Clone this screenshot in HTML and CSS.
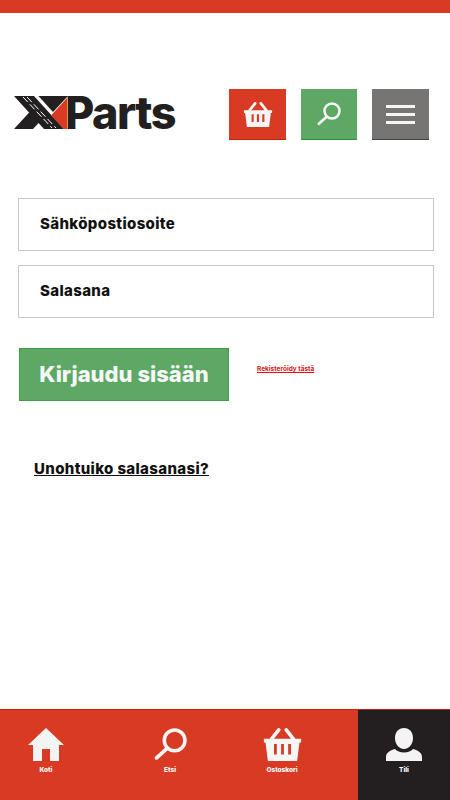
FILE: index.html
```html
<!DOCTYPE html>
<html lang="fi">
<head>
<meta charset="utf-8">
<title>XParts</title>
<link rel="stylesheet" href="styles.css">
</head>
<body>
<div class="topbar"></div>
<header class="header">
  <div class="logo">
    <svg class="logo-mark" viewBox="0 0 54 33" width="54" height="33">
      <path fill="#231f20" d="M0 0H20L50 33H30Z"/>
      <path fill="#231f20" d="M0 33L16.500 15L26 25.500L19 33Z"/>
      <path fill="#231f20" d="M24.500 0H54L39 16L33.500 10Z"/>
      <path fill="#d93a23" d="M53 2V33H50L37 19.500Z"/>
      <path fill="none" stroke="#fff" stroke-width="1" stroke-dasharray="7 3" d="M9 1L38 32M13 1L42 32"/>
    </svg>
    <span class="logo-text">Parts</span>
  </div>
  <nav class="actions">
    <a class="action action-red"><svg class="icon-basket" viewBox="0 0 40 35" width="30" height="25"><use href="#basket"/></svg></a>
    <a class="action action-green"><svg class="icon-search" viewBox="0 0 32 32" width="24" height="24"><use href="#search"/></svg></a>
    <a class="action action-grey"><span class="burger"><i></i><i></i><i></i></span></a>
  </nav>
</header>
<main class="form">
  <div class="field">Sähköpostiosoite</div>
  <div class="field">Salasana</div>
  <div class="submit-row">
    <button class="submit">Kirjaudu sisään</button>
    <a class="register">Rekisteröidy tästä</a>
  </div>
  <a class="forgot">Unohtuiko salasanasi?</a>
</main>
<footer class="tabs">
  <a class="tab tab-home"><svg viewBox="0 0 38 33" width="38" height="33"><path fill="#f4f4f4" d="M19 0L37 17H32V33H23V21H15V33H6V17H1z"/></svg><span>Koti</span></a>
  <a class="tab tab-search"><svg viewBox="0 0 32 32" width="33" height="33"><use href="#search"/></svg><span>Etsi</span></a>
  <a class="tab tab-cart"><svg viewBox="0 0 40 35" width="41" height="33"><use href="#basket"/></svg><span>Ostoskori</span></a>
  <a class="tab tab-dark"><svg viewBox="0 0 36 33" width="36" height="33"><path fill="#f4f4f4" d="M18 0c5.500 0 9 4.200 9 10s-3.700 11-9 11S9 15.800 9 10 12.500 0 18 0zM0 33v-4c0-4.500 4-6.500 9-8 2 2 5 3.500 9 3.500s7-1.500 9-3.500c5 1.500 9 3.500 9 8v4z"/></svg><span>Tili</span></a>
</footer>
<svg class="defs" width="0" height="0">
  <defs>
    <symbol id="basket" viewBox="0 0 40 35">
      <path fill="#f6f6f6" d="M0 11.500H40V15.500H38L35.500 35H4.500L2 15.500H0z"/>
      <path fill="none" stroke="#f6f6f6" stroke-width="3.800" stroke-linecap="round" d="M8.500 11.500L16 2M31.500 11.500L24 2"/>
      <path fill="#d93a23" d="M11 17h3v11h-3zM18.500 17h3v11h-3zM26 17h3v11h-3z"/>
    </symbol>
    <symbol id="search" viewBox="0 0 32 32">
      <circle cx="20" cy="12" r="10" fill="none" stroke="#f6f6f6" stroke-width="3.400"/>
      <path stroke="#f6f6f6" stroke-width="3.600" stroke-linecap="round" d="M12.500 20L2.500 29"/>
    </symbol>
  </defs>
</svg>
</body>
</html>
```
FILE: styles.css
```css
* { box-sizing: border-box; }
html, body { margin: 0; padding: 0; }
body {
  width: 450px;
  height: 800px;
  background: #fff;
  font-family: Inter, "Liberation Sans", sans-serif;
  display: flex;
  flex-direction: column;
  overflow: hidden;
}
.defs { position: absolute; }
.topbar { height: 13px; background: #d93a23; flex: none; }
.header {
  display: flex;
  justify-content: space-between;
  align-items: flex-start;
  margin-top: 76px;
  padding: 0 21px 0 14px;
  flex: none;
}
.logo {
  display: flex;
  align-items: center;
  margin-top: 7px;
  height: 33px;
  color: #231f20;
}
.logo-mark { flex: none; margin-right: -3px; }
.logo-text {
  font-size: 45px;
  font-weight: 800;
  letter-spacing: -1.5px;
  line-height: 33px;
}
.actions { display: flex; gap: 15px; }
.action {
  width: 57px;
  height: 51px;
  display: flex;
  align-items: center;
  justify-content: center;
}
.action-red { background: #d93a23; border-bottom: 1px solid #c8200c; }
.action-green { width: 56px; background: #5ca864; border-bottom: 1px solid #2b9038; }
.action-grey { background: #767573; border-bottom: 1px solid #454442; }
.burger { display: flex; flex-direction: column; gap: 5px; width: 29px; }
.burger i { display: block; height: 3px; background: #f6f6f6; }
.form {
  flex: 1;
  padding: 58px 16px 0 18px;
  display: flex;
  flex-direction: column;
  align-items: flex-start;
}
.field {
  width: 100%;
  height: 53px;
  border: 1px solid #c9c9c9;
  padding: 0 0 2px 21px;
  display: flex;
  align-items: center;
  font-size: 15px;
  font-weight: 800;
  letter-spacing: .35px;
  color: #111;
  margin-bottom: 14px;
}
.submit-row {
  display: flex;
  align-items: flex-start;
  margin-top: 16px;
  margin-left: 1px;
}
.submit {
  width: 210px;
  height: 53px;
  background: #5ca864;
  border: 1px solid #3d9d48;
  color: #f6f6f6;
  font-family: inherit;
  font-size: 22px;
  font-weight: 800;
  padding: 0 0 2px;
}
.register {
  margin: 16px 0 0 28px;
  font-size: 6.500px;
  font-weight: 700;
  color: #e01010;
  text-decoration: underline;
  line-height: 10px;
}
.forgot {
  margin: 58px 0 0 16px;
  font-size: 15px;
  font-weight: 800;
  letter-spacing: .35px;
  color: #111;
  text-decoration: underline;
  line-height: 20px;
}
.tabs {
  flex: none;
  height: 91px;
  background: #d93a23;
  border-top: 1px solid #c8200c;
  display: flex;
}
.tab {
  padding-top: 18px;
  display: flex;
  flex-direction: column;
  align-items: center;
  color: #fff;
  font-size: 6.500px;
  font-weight: 800;
  gap: 5px;
  line-height: 8px;
}
.tab svg { flex: none; }
.tab-home { width: 92px; }
.tab-search { width: 156px; }
.tab-cart { width: 68px; margin-right: 42px; }
.tab-dark { width: 92px; background: #231f20; }
```
